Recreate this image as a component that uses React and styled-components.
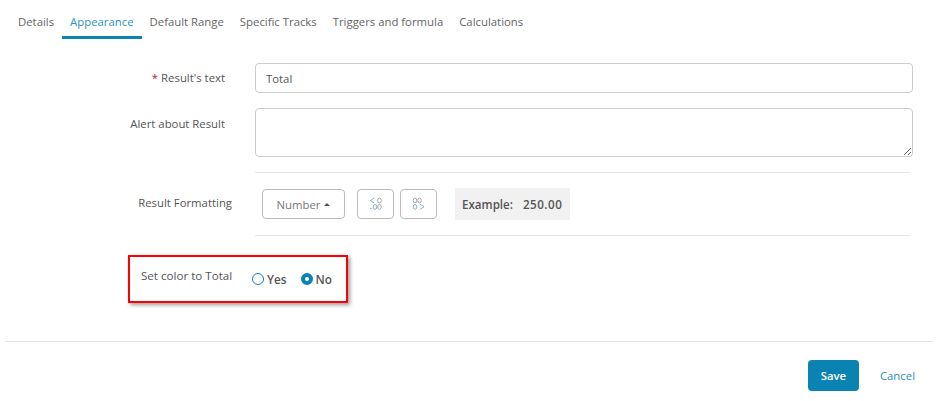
import React from "react";
import styled, { createGlobalStyle } from "styled-components";

const GlobalStyle = createGlobalStyle`
    html, body{
        margin: 0;
        padding: 0;
        background: #fff;
    }
    body{
        font-family: 'Open Sans', sans-serif;
        font-size: 11.35px;
        color: #555;
    }
`;

const Page = styled.div`
    width: 943px;
    height: 401px;
    overflow: hidden;
    display: flex;
    flex-direction: column;
`;

const Tabs = styled.div`
    display: flex;
    height: 39px;
    padding: 0 0 0 10px;
    box-sizing: border-box;
`;

const Tab = styled.div`
    height: 39px;
    box-sizing: border-box;
    padding: 13px 8px 0;
    line-height: 17px;
    white-space: nowrap;
    color: ${p => (p.$active ? "#2b93bd" : "#666")};
    border-bottom: 3px solid ${p => (p.$active ? "#0a83b3" : "transparent")};
`;

const Form = styled.div`
    display: flex;
    flex-direction: column;
    padding-top: 24px;
`;

const Row = styled.div`
    display: flex;
    align-items: flex-start;
    padding: ${p => p.$pad || 0}px 0;
    margin-bottom: ${p => p.$gap || 0}px;
`;

const Label = styled.label`
    width: ${p => p.$width || 225}px;
    margin-right: ${p => 255 - (p.$width || 225)}px;
    padding-top: ${p => p.$top || 0}px;
    flex: none;
    text-align: right;
    line-height: 17px;
    color: #555;
`;

const Required = styled.span`
    color: #b3262a;
    margin-right: 3px;
`;

const TextInput = styled.input`
    width: 658px;
    height: 30px;
    box-sizing: border-box;
    padding: 0 10px;
    border: 1px solid #ccc;
    border-radius: 4px;
    font: inherit;
    color: #555;
    outline: none;
`;

const TextArea = styled.textarea`
    display: block;
    width: 658px;
    height: 49px;
    box-sizing: border-box;
    padding: 6px 10px;
    border: 1px solid #ccc;
    border-radius: 4px;
    font: inherit;
    outline: none;
`;

const Divider = styled.hr`
    width: 655px;
    height: 1px;
    margin: 0 0 0 255px;
    border: none;
    background: #e4e4e4;
`;

const FormatRow = styled.div`
    display: flex;
    align-items: center;
    margin-left: 7px;
`;

const OutlineButton = styled.button`
    height: 30px;
    width: ${p => p.$width}px;
    margin-right: ${p => p.$right || 0}px;
    padding: 0;
    box-sizing: border-box;
    border: 1px solid #bbb;
    border-radius: 4px;
    background: #fff;
    font: inherit;
    color: #777;
    display: flex;
    align-items: center;
    justify-content: center;
`;

const Caret = styled.span`
    width: 0;
    height: 0;
    margin-left: 4px;
    border-left: 3px solid transparent;
    border-right: 3px solid transparent;
    border-bottom: 3px solid #555;
`;

const Example = styled.div`
    height: 32px;
    width: 115px;
    margin-left: 18px;
    box-sizing: border-box;
    padding-left: 7px;
    background: #f1f1f1;
    display: flex;
    align-items: center;
    gap: 10px;
    font-size: 11.6px;
    font-weight: 600;
    color: #555;
`;

const ExampleValue = styled.span`
    letter-spacing: 0.5px;
`;

const Highlight = styled.div`
    width: 220px;
    height: 48px;
    box-sizing: border-box;
    margin: 19px 0 0 128px;
    padding: 10px 0 0 11px;
    border: 2px solid #f00;
    box-shadow: 2px 2px 4px rgba(0, 0, 0, 0.4);
    display: flex;
    align-items: flex-start;
`;

const HighlightLabel = styled.span`
    width: 91px;
    margin-right: 20px;
    flex: none;
    font-size: 11.6px;
    line-height: 17px;
    white-space: nowrap;
`;

const RadioOption = styled.label`
    display: flex;
    align-items: center;
    height: 17px;
    margin: 3px 14px 0 0;
    font-size: 11.8px;
    font-weight: 600;
    color: #555;
`;

const RadioDot = styled.span`
    width: 12px;
    height: 12px;
    margin-right: 3px;
    border-radius: 50%;
    box-sizing: border-box;
    border: ${p => (p.$checked ? "4px solid #0a83b3" : "1.5px solid #0a83b3")};
    background: #fff;
`;

const Footer = styled.div`
    margin: 38px 0 0 5px;
    width: 928px;
    height: 50px;
    box-sizing: border-box;
    border-top: 1px solid #e4e4e4;
    padding: 18px 18px 0 0;
    display: flex;
    justify-content: flex-end;
    align-items: center;
    gap: 21px;
`;

const SaveButton = styled.button`
    width: 51px;
    height: 31px;
    padding: 0;
    border: none;
    border-radius: 4px;
    background: #0a83b3;
    color: #fff;
    font: inherit;
    font-weight: 600;
`;

const CancelLink = styled.a`
    color: #2b8fb8;
`;

const DecimalLess = () => (
    <svg width="14" height="14" viewBox="0 0 14 14" fill="none" strokeWidth="1">
        <path d="M5 1 L1.5 3.5 L5 6" stroke="#7fb2d0" />
        <ellipse cx="10.5" cy="3.5" rx="1.8" ry="2.4" stroke="#a8a8a8" />
        <ellipse cx="10.5" cy="9.9" rx="1.8" ry="2.4" stroke="#a8a8a8" />
        <ellipse cx="6" cy="9.9" rx="1.8" ry="2.4" stroke="#7fb2d0" />
        <circle cx="2" cy="11.5" r="0.8" fill="#7fb2d0" />
    </svg>
);

const DecimalMore = () => (
    <svg width="14" height="14" viewBox="0 0 14 14" fill="none" strokeWidth="1">
        <ellipse cx="3" cy="3.5" rx="1.8" ry="2.4" stroke="#a8a8a8" />
        <ellipse cx="7.5" cy="3.5" rx="1.8" ry="2.4" stroke="#a8a8a8" />
        <ellipse cx="3" cy="9.9" rx="1.8" ry="2.4" stroke="#7fb2d0" />
        <path d="M8 7 L12 9.7 L8 12.4" stroke="#7fb2d0" />
    </svg>
);

const tabs = ["Details", "Appearance", "Default Range", "Specific Tracks", "Triggers and formula", "Calculations"];

export default function App(){
    return(
        <Page>
            <GlobalStyle />
            <Tabs>
                {tabs.map(item => <Tab key={item} $active={item === "Appearance"}>{item}</Tab>)}
            </Tabs>
            <Form>
                <Row $gap={15}>
                    <Label $top={6}><Required>*</Required>Result's text</Label>
                    <TextInput defaultValue="Total" />
                </Row>
                <Row $gap={15}>
                    <Label $top={7}>Alert about Result</Label>
                    <TextArea />
                </Row>
                <Divider />
                <Row $pad={15}>
                    <Label $width={232} $top={6}>Result Formatting</Label>
                    <FormatRow>
                        <OutlineButton $width={83} $right={12}>Number<Caret /></OutlineButton>
                        <OutlineButton $width={37} $right={6}><DecimalLess /></OutlineButton>
                        <OutlineButton $width={37}><DecimalMore /></OutlineButton>
                        <Example><span>Example:</span><ExampleValue>250.00</ExampleValue></Example>
                    </FormatRow>
                </Row>
                <Divider />
                <Highlight>
                    <HighlightLabel>Set color to Total</HighlightLabel>
                    <RadioOption><RadioDot />Yes</RadioOption>
                    <RadioOption><RadioDot $checked />No</RadioOption>
                </Highlight>
                <Footer>
                    <SaveButton>Save</SaveButton>
                    <CancelLink>Cancel</CancelLink>
                </Footer>
            </Form>
        </Page>
    );
}
